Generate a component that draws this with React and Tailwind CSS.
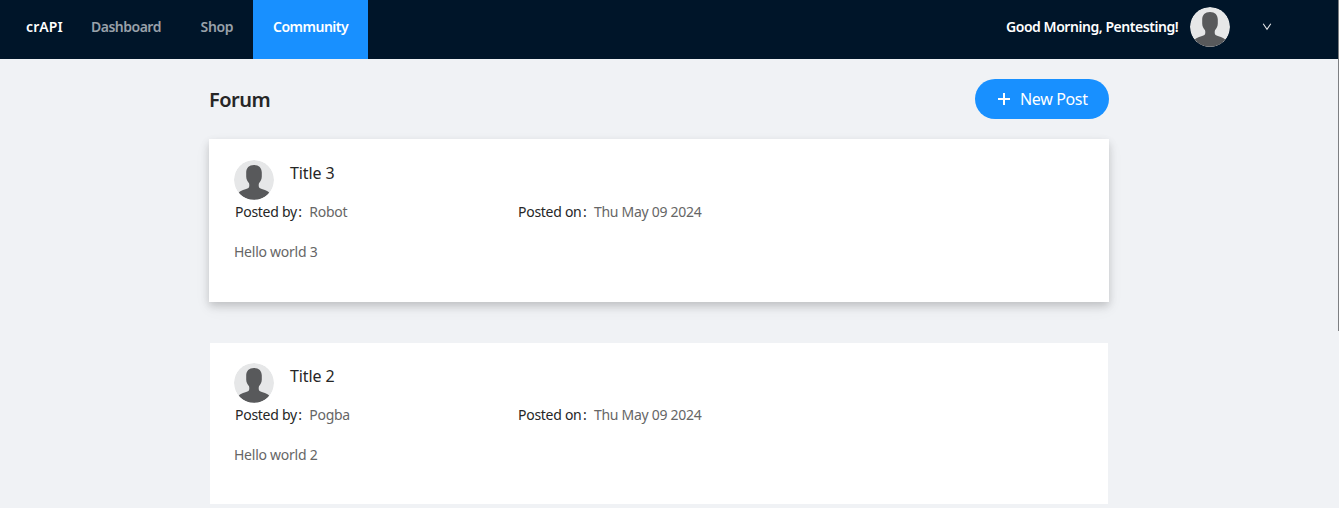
import React from "react";

function Avatar() {
  return (
    <svg viewBox="0 0 40 40" className="block h-10 w-10 shrink-0 rounded-full">
      <circle cx="20" cy="20" r="20" fill="#e6e7e8" />
      <path
        d="M20 5C25 5 27.800 8 27.800 12.500V16.500C27.800 19.500 26.500 21.500 25 23.200C24.600 24.500 24.600 26 25 27.200C26 29.200 32.200 29.200 35.300 32.700A20 20 0 0 1 4.700 32.700C7.800 29.200 14 29.200 15 27.200C15.400 26 15.400 24.500 15 23.200C13.500 21.500 12.200 19.500 12.200 16.500V12.500C12.200 8 15 5 20 5Z"
        fill="#58595b"
      />
    </svg>
  );
}

function Field({ label, value }) {
  return (
    <div className="flex">
      <span className="text-[#262626]">{label}</span>
      <span className="ml-[1.5px] w-[11px] text-[#262626]">:</span>
      <span className="text-[#666666]">{value}</span>
    </div>
  );
}

function Post({ title, author, date, body, raised }) {
  return (
    <article
      className={
        raised
          ? "h-[163px] w-[900px] bg-white px-[25px] pt-[21px] shadow-[0_4px_8px_rgba(0,0,0,0.17),0_6px_16px_rgba(0,0,0,0.05)]"
          : "mx-px h-[161px] w-[898px] bg-white px-6 pt-5"
      }
    >
      <div className="flex h-10 gap-4">
        <Avatar />
        <h2 className="pt-px text-[16px] leading-6 tracking-[-0.1px] text-[#262626]">{title}</h2>
      </div>
      <div className="grid grid-cols-[283px_1fr] pt-px pl-px text-[14px] leading-[22px] tracking-[-0.28px]">
        <Field label="Posted by" value={author} />
        <Field label="Posted on" value={date} />
      </div>
      <p className="pt-[18px] text-[14px] leading-[22px] tracking-[-0.25px] text-[#666666]">{body}</p>
    </article>
  );
}

export default function App() {
  return (
    <div className="flex h-[508px] w-[1339px] overflow-hidden bg-[#f0f2f5] font-['Noto_Sans',sans-serif]">
      <div className="w-[1338px] shrink-0">
        <header className="flex h-[59px] bg-[#001529] text-[14px] font-semibold leading-[54px]">
          <span className="ml-[26px] w-[45px] tracking-[0.1px] text-white">crAPI</span>
          <nav className="flex tracking-[-0.5px] text-[#99a1a9]">
            <a className="w-[109px] pl-5">Dashboard</a>
            <a className="w-[73px] pl-[20.5px] tracking-[-0.3px]">Shop</a>
            <a className="w-[115px] bg-[#1890ff] pl-5 text-white">Community</a>
          </nav>
          <div className="ml-auto flex pr-[66px]">
            <span className="w-[184px] tracking-[-0.45px] text-white">Good Morning, Pentesting!</span>
            <div className="pt-[7px]"><Avatar /></div>
            <svg viewBox="0 0 10 10" className="mt-[22px] ml-8 h-[10px] w-[10px]">
              <path d="M1.200 1.800 5 7.200 8.800 1.800" fill="none" stroke="#e6e8ea" strokeWidth="1.100" />
            </svg>
          </div>
        </header>
        <main className="ml-[209px] w-[900px]">
          <div className="flex h-20 items-center justify-between">
            <h1 className="pt-[2px] text-[20px] font-semibold leading-7 tracking-[-0.5px] text-[#262626]">Forum</h1>
            <button className="flex h-10 w-[134px] items-center rounded-full bg-[#1890ff] pl-[23px] text-[16px] tracking-[-0.35px] text-white">
              <svg viewBox="0 0 12 12" className="mr-[10px] h-3 w-3">
                <path d="M6 0v12M0 6h12" stroke="white" strokeWidth="2" />
              </svg>
              New Post
            </button>
          </div>
          <div className="flex flex-col gap-[41px]">
            <Post title="Title 3" author="Robot" date="Thu May 09 2024" body="Hello world 3" raised />
            <Post title="Title 2" author="Pogba" date="Thu May 09 2024" body="Hello world 2" />
          </div>
        </main>
      </div>
      <div className="h-[331px] w-px bg-[#7d7f82]" />
    </div>
  );
}
